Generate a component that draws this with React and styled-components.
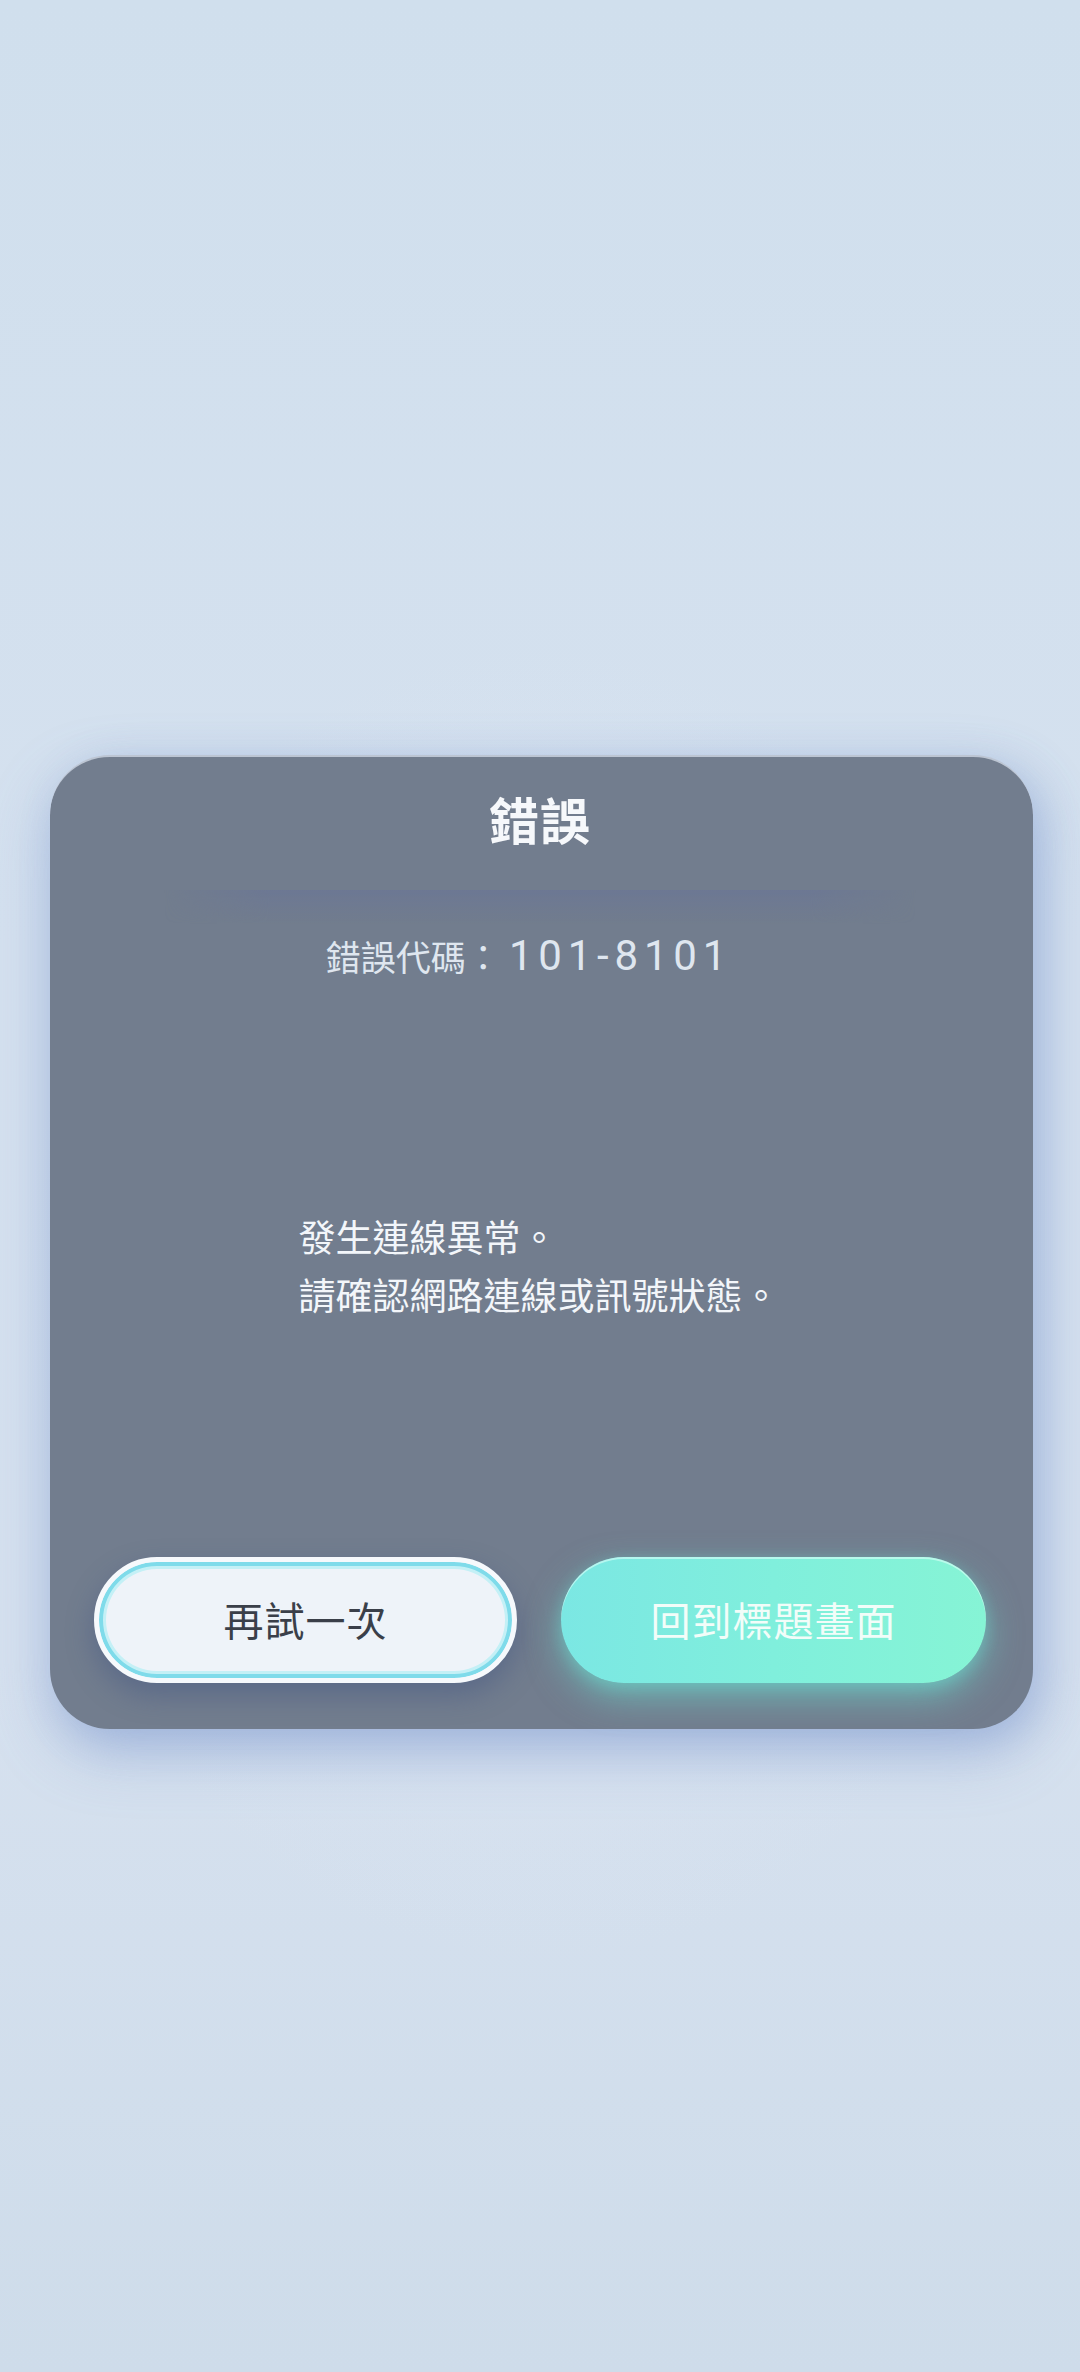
import React from 'react'
import styled, { createGlobalStyle } from 'styled-components'

const GlobalStyle = createGlobalStyle`
  html, body {
    margin: 0;
    padding: 0;
  }
  body {
    background: #d3e0ee;
    font-family: "Noto Sans CJK TC", "Noto Sans", sans-serif;
  }
`

const Screen = styled.div`
  box-sizing: border-box;
  width: 1080px;
  height: 2372px;
  padding-top: 755px;
  background:
    radial-gradient(ellipse 70% 40% at 50% 55%, rgba(222, 230, 243, 0.7), rgba(222, 230, 243, 0) 70%),
    linear-gradient(180deg, #d0dfed 0%, #d5e1ef 40%, #d6e1ef 70%, #cedcea 100%);
  overflow: hidden;
`

const Card = styled.section`
  box-sizing: border-box;
  width: 983px;
  height: 974px;
  margin-left: 50px;
  display: flex;
  flex-direction: column;
  padding: 0 47px 46px 44px;
  border-radius: 60px;
  background: #727d8e;
  border-top: 2px solid rgba(214, 222, 234, 0.75);
  box-shadow:
    0 24px 60px rgba(110, 140, 200, 0.38),
    12px 10px 40px rgba(120, 150, 205, 0.3);
`

const Header = styled.header`
  height: 133px;
  display: flex;
  align-items: center;
  justify-content: center;
`

const Title = styled.h1`
  margin: 0 0 12px;
  font-size: 50px;
  font-weight: 700;
  color: #f6f8fb;
  letter-spacing: 1px;
`

const Divider = styled.div`
  height: 34px;
  margin: 0 70px;
  background: linear-gradient(180deg, rgba(104, 116, 152, 0.55) 0%, rgba(104, 116, 152, 0.25) 55%, rgba(104, 116, 152, 0) 100%);
  -webkit-mask-image: linear-gradient(90deg, transparent 0%, #000 14%, #000 86%, transparent 100%);
  mask-image: linear-gradient(90deg, transparent 0%, #000 14%, #000 86%, transparent 100%);
`

const CodeLine = styled.p`
  margin: 6px 0 0;
  padding-right: 22px;
  height: 50px;
  display: flex;
  align-items: center;
  justify-content: center;
  color: #dfe6ef;
`

const CodeLabel = styled.span`
  font-size: 35px;
`

const CodeNumber = styled.span`
  font-family: Roboto, "DejaVu Sans", sans-serif;
  font-size: 42px;
  letter-spacing: 5.8px;
  margin-left: 8px;
`

const Body = styled.div`
  flex: 1;
  display: flex;
  align-items: center;
  justify-content: center;
  padding-right: 2px;
  padding-bottom: 8px;
`

const Message = styled.p`
  margin: 0;
  font-size: 37px;
  line-height: 58px;
  color: #f3f6fa;
`

const Actions = styled.div`
  display: grid;
  grid-template-columns: 423px 425px;
  column-gap: 44px;
`

const Button = styled.button`
  box-sizing: border-box;
  height: 126px;
  border-radius: 63px;
  font-family: "Noto Sans CJK TC", "Noto Sans", sans-serif;
  font-size: 40px;
  letter-spacing: 1px;
  cursor: pointer;
  display: flex;
  align-items: center;
  justify-content: center;
  padding: 0 0 2px;
  color: ${p => (p.$primary ? '#f2fdf9' : '#3a3f49')};
  border: ${p => (p.$primary ? '0' : '5px solid #f6f9fc')};
  background: ${p =>
    p.$primary
      ? 'linear-gradient(90deg, #7be7e3 0%, #80efdc 50%, #86f4d5 100%)'
      : '#eef3f9'};
  box-shadow: ${p =>
    p.$primary
      ? 'inset 0 2px 0 rgba(220, 255, 248, 0.6), 0 14px 34px rgba(105, 228, 212, 0.55), 0 4px 14px rgba(110, 230, 215, 0.35)'
      : 'inset 0 0 0 4px #7fdbea, inset 0 0 0 7px #c4f0f6, 0 12px 28px rgba(62, 82, 128, 0.45)'};
`

export default function App() {
  return (
    <>
      <GlobalStyle />
      <Screen>
        <Card>
          <Header>
            <Title>錯誤</Title>
          </Header>
          <Divider />
          <CodeLine>
            <CodeLabel>錯誤代碼：</CodeLabel>
            <CodeNumber>101-8101</CodeNumber>
          </CodeLine>
          <Body>
            <Message>
              發生連線異常。
              <br />
              請確認網路連線或訊號狀態。
            </Message>
          </Body>
          <Actions>
            <Button>再試一次</Button>
            <Button $primary>回到標題畫面</Button>
          </Actions>
        </Card>
      </Screen>
    </>
  )
}
